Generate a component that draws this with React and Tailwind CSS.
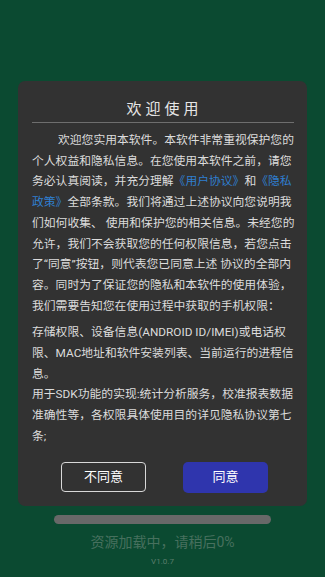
import React from "react";

const font = { fontFamily: 'Roboto, "Noto Sans CJK SC", sans-serif' };

const Link = ({ children }) => <span className="text-[#2f7fd0]">{children}</span>;

function PrivacyDialog() {
  return (
    <div className="mx-[18px] mt-[81px] rounded-[7px] bg-[#323232] pl-[14px] pr-[8px] pb-[13px]">
      <div className="pt-[18px] pb-[3px] pr-[2px] text-center text-[15px] leading-[20px] tracking-[4px] text-[#e6e6e6]">
        欢迎使用
      </div>
      <div className="mr-[5px] h-px bg-[#6e6e6e]" />
      <div className="pt-[7px] text-[11.8px] leading-[20.7px] text-[#dcdcdc] whitespace-nowrap">
        <p className="indent-[26px]">
          欢迎您实用本软件。本软件非常重视保护您的<br />
          个人权益和隐私信息。在您使用本软件之前，请您<br />
          务必认真阅读，并充分理解<Link>《用户协议》</Link>和<Link>《隐私</Link><br />
          <Link>政策》</Link>全部条款。我们将通过上述协议向您说明我<br />
          们如何收集、 使用和保护您的相关信息。未经您的<br />
          允许，我们不会获取您的任何权限信息，若您点击<br />
          了“同意”按钮，则代表您已同意上述 协议的全部内<br />
          容。同时为了保证您的隐私和本软件的使用体验，<br />
          我们需要告知您在使用过程中获取的手机权限：
        </p>
        <p className="mt-[6px]">
          存储权限、设备信息(ANDROID ID/IMEI)或电话权<br />
          限、MAC地址和软件安装列表、当前运行的进程信<br />
          息。
        </p>
        <p>
          用于SDK功能的实现:统计分析服务，校准报表数据<br />
          准确性等，各权限具体使用目的详见隐私协议第七<br />
          条;
        </p>
      </div>
      <div className="mt-[15px] flex justify-center gap-[37px] pr-[2px]">
        <button className="h-[30px] w-[85px] rounded-[4px] border border-[#d8d8d8] text-[13px] text-white">
          不同意
        </button>
        <button className="h-[31px] w-[85px] rounded-[5px] bg-[#2f35ad] text-[13px] text-white">
          同意
        </button>
      </div>
    </div>
  );
}

export default function App() {
  return (
    <div className="h-[577px] w-[325px] overflow-hidden bg-[#0b4a31] flex flex-col" style={font}>
      <PrivacyDialog />
      <div className="mx-auto mt-[9px] h-[9px] w-[217px] rounded-full bg-[#686868]" />
      <div className="mt-[8px] text-center text-[14px] leading-[20px] text-[#47705e]">
        资源加载中，请稍后0%
      </div>
      <div className="mt-[4px] text-center text-[8px] leading-[12px] text-[#5a7d6c]">
        V1.0.7
      </div>
    </div>
  );
}
